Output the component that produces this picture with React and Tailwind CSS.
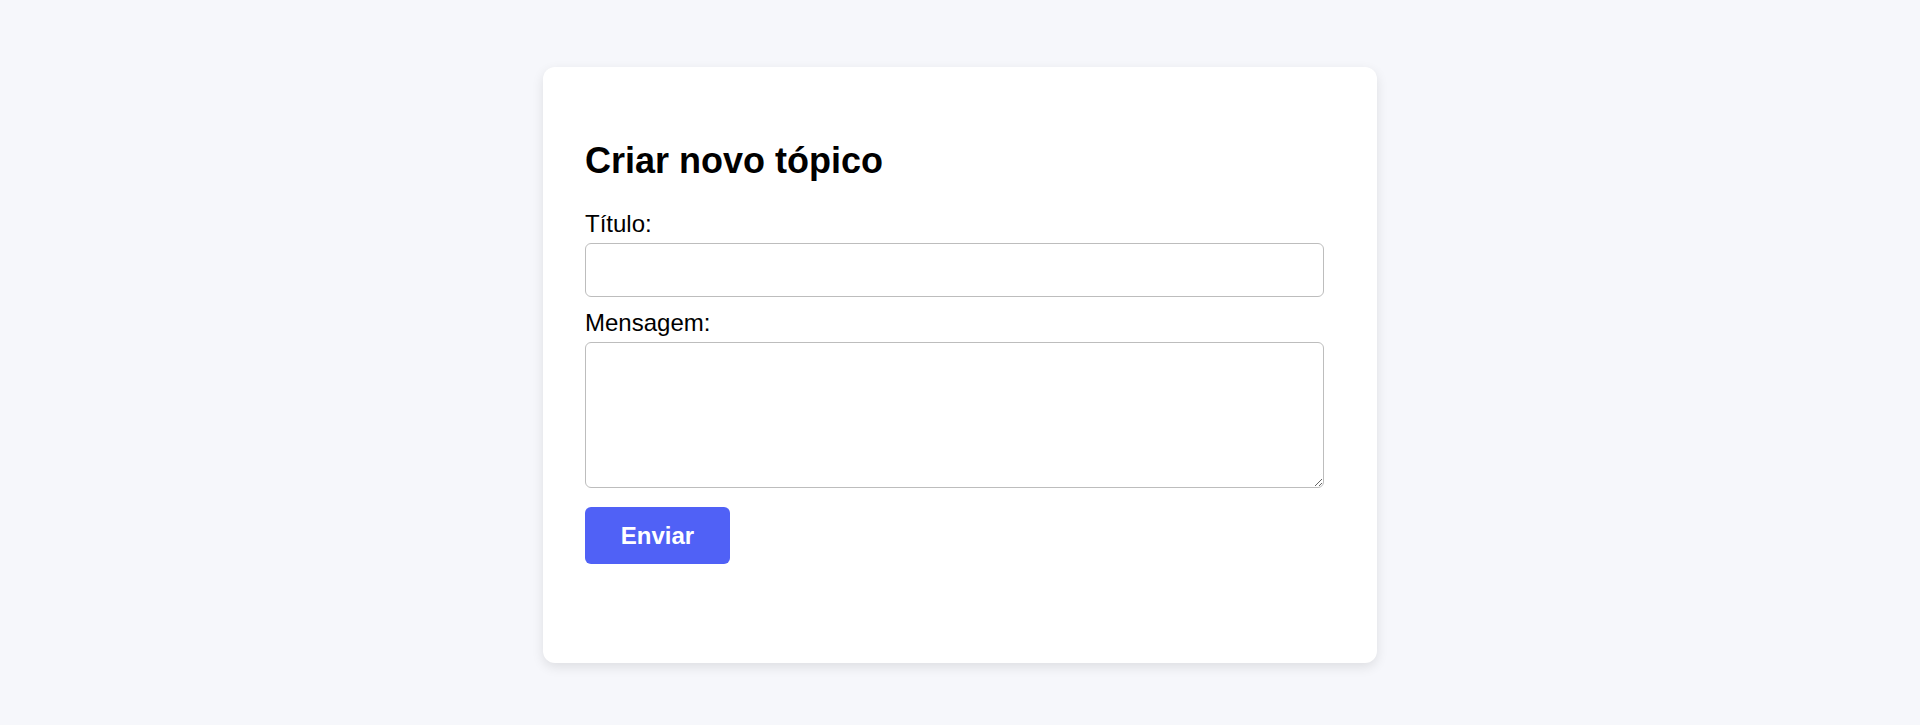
import React from 'react';

const App = () => {
  return (
    <div className="min-h-screen h-[725px] bg-[#f6f7fb] flex justify-center items-start pt-[67px] font-['Liberation_Sans',Arial,sans-serif] text-black">
      <div className="w-[834px] h-[596px] bg-white rounded-xl shadow-[0_4px_12px_rgba(0,0,0,0.1)] pl-[42px] pr-[53px] pt-[73px]">
        <h2 className="text-[36px] font-bold leading-[41px] mb-[29px]">Criar novo tópico</h2>
        <form onSubmit={(e) => e.preventDefault()}>
          <label htmlFor="titulo" className="block text-[24px] leading-[28px] mb-[5px]">
            Título:
          </label>
          <input
            id="titulo"
            type="text"
            className="block w-full h-[54px] border border-[#bdbdbd] rounded-md px-3 text-[24px] outline-none"
          />
          <label htmlFor="mensagem" className="block text-[24px] leading-[28px] mt-[12px] mb-[5px]">
            Mensagem:
          </label>
          <textarea
            id="mensagem"
            className="block w-full h-[146px] border border-[#bdbdbd] rounded-md px-3 py-2 text-[24px] outline-none"
          />
          <button
            type="submit"
            className="mt-[19px] w-[145px] h-[57px] bg-[#5061f6] rounded-md text-white font-bold text-[24px]"
          >
            Enviar
          </button>
        </form>
      </div>
    </div>
  );
};

export default App;
